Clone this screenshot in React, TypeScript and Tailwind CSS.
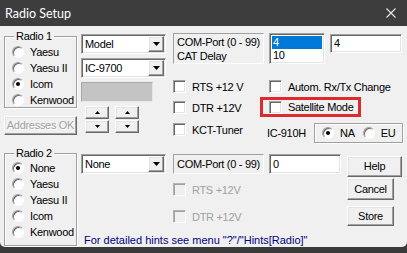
import React from "react";

const SUNKEN =
  "border border-t-[#a0a0a0] border-l-[#a0a0a0] border-b-white border-r-white shadow-[inset_1px_1px_0_#696969,inset_-1px_-1px_0_#e3e3e3]";
const RAISED =
  "border border-t-white border-l-white border-b-[#696969] border-r-[#696969] shadow-[inset_-1px_-1px_0_#a0a0a0,inset_1px_1px_0_#e3e3e3] bg-[#f0f0f0]";
const ETCHED = "border border-[#a0a0a0] shadow-[inset_1px_1px_0_#ffffff,1px_1px_0_#ffffff]";

function DownTri() {
  return (
    <svg width="7" height="4" viewBox="0 0 7 4">
      <path d="M0 0H7L3.5 4Z" fill="#000" />
    </svg>
  );
}

function SmallTri({ up }: { up?: boolean }) {
  return (
    <svg width="5" height="3" viewBox="0 0 5 3">
      {up ? <path d="M0 3H5L2.5 0Z" fill="#000" /> : <path d="M0 0H5L2.5 3Z" fill="#000" />}
    </svg>
  );
}

function Select({ value }: { value: string }) {
  return (
    <div className={`${SUNKEN} bg-white w-[85px] h-[20px] p-[1px] flex items-center`}>
      <span className="flex-1 pl-[2px] leading-[16px]">{value}</span>
      <span className={`${RAISED} w-[16px] h-[16px] flex items-center justify-center`}>
        <DownTri />
      </span>
    </div>
  );
}

function Radio({ label, checked }: { label: string; checked?: boolean }) {
  return (
    <div className="flex items-center h-[16px]">
      <span className="w-[12px] h-[12px] shrink-0 rounded-full bg-white border border-t-[#a0a0a0] border-l-[#a0a0a0] border-b-white border-r-white shadow-[inset_1px_1px_0_#696969] flex items-center justify-center">
        {checked && <span className="w-[4px] h-[4px] rounded-full bg-black" />}
      </span>
      <span className="ml-[6px] whitespace-nowrap leading-[14px]">{label}</span>
    </div>
  );
}

function Check({ label, disabled }: { label: string; disabled?: boolean }) {
  return (
    <div className="flex items-center h-[13px]">
      <span
        className={
          disabled
            ? "w-[13px] h-[13px] shrink-0 border border-t-[#b4b4b4] border-l-[#b4b4b4] border-b-white border-r-white shadow-[inset_1px_1px_0_#a0a0a0] bg-[#f0f0f0]"
            : `w-[13px] h-[13px] shrink-0 ${SUNKEN} bg-white`
        }
      />
      <span className={`ml-[6px] whitespace-nowrap leading-[14px] ${disabled ? "text-[#a0a0a0]" : ""}`}>
        {label}
      </span>
    </div>
  );
}

function Spinner() {
  return (
    <div className="flex flex-col gap-[1px]">
      <span className={`${RAISED} w-[24px] h-[13px] flex items-center justify-center`}>
        <SmallTri up />
      </span>
      <span className={`${RAISED} w-[24px] h-[13px] flex items-center justify-center`}>
        <SmallTri />
      </span>
    </div>
  );
}

export default function App() {
  return (
    <div className="w-[407px] h-[253px] bg-[#3a3a3a] overflow-hidden font-['Liberation_Sans',Arial,sans-serif] text-[11px] tracking-[-0.3px] text-black">
      {/* Title bar */}
      <div className="h-[26px] bg-[#3d3d3d] flex items-center justify-between pl-[5px] pr-[11px]">
        <span className="font-['Lato',sans-serif] text-[12.5px] tracking-normal text-white leading-[16px] pt-[1px]">Radio Setup</span>
        <svg width="10" height="10" viewBox="0 0 10 10">
          <path d="M0.5 0.5L9.5 9.5M9.5 0.5L0.5 9.5" stroke="#e8e8e8" strokeWidth="1.1" />
        </svg>
      </div>

      {/* Body */}
      <div className="h-[221px] bg-[#f0f0f0] rounded-b-[5px] flex pl-[4px]">
        {/* Left column */}
        <div className="w-[73px] flex flex-col shrink-0">
          <div className={`relative ${ETCHED} h-[72px] mt-[10px] pl-[7px] pt-[7px]`}>
            <span className="absolute left-[9px] top-[-8px] bg-[#f0f0f0] px-[2px] leading-[14px]">Radio 1</span>
            <Radio label="Yaesu" />
            <Radio label="Yaesu II" />
            <Radio label="Icom" checked />
            <Radio label="Kenwood" />
          </div>
          <div className={`${RAISED} h-[19px] mt-[8px] flex items-center justify-center text-[#a0a0a0] [text-shadow:1px_1px_0_#fff] whitespace-nowrap`}>
            Addresses OK
          </div>
          <div className={`relative ${ETCHED} h-[93px] mt-[18px] pl-[7px] pt-[6px]`}>
            <span className="absolute left-[9px] top-[-8px] bg-[#f0f0f0] px-[2px] leading-[14px]">Radio 2</span>
            <Radio label="None" checked />
            <Radio label="Yaesu" />
            <Radio label="Yaesu II" />
            <Radio label="Icom" />
            <Radio label="Kenwood" />
          </div>
        </div>

        {/* Right area */}
        <div className="ml-[4px] w-[322px] flex flex-col">
          {/* Top block */}
          <div className="h-[124px] flex">
            {/* Col A */}
            <div className="w-[85px] flex flex-col">
              <div className="mt-[8px]">
                <Select value="Model" />
              </div>
              <div className="mt-[4px]">
                <Select value="IC-9700" />
              </div>
              <div className="mt-[4px] w-[72px] h-[20px] bg-[#c4c4c4] border border-t-[#a8a8a8] border-l-[#a8a8a8] border-b-[#e6e6e6] border-r-[#e6e6e6]" />
              <div className="mt-[4px] ml-[4px] flex gap-[6px]">
                <Spinner />
                <Spinner />
              </div>
            </div>
            {/* Col B */}
            <div className="ml-[6px] w-[93px] flex flex-col pl-[1px]">
              <div className="mt-[7px] w-[91px] h-[31px] border border-t-[#a0a0a0] border-l-[#a0a0a0] border-b-white border-r-white pl-[3px] pt-[1px] leading-[14px] whitespace-nowrap">
                <div>COM-Port (0 - 99)</div>
                <div>CAT Delay</div>
              </div>
              <div className="mt-[16px]">
                <Check label="RTS +12 V" />
              </div>
              <div className="mt-[8px]">
                <Check label="DTR +12V" />
              </div>
              <div className="mt-[9px]">
                <Check label="KCT-Tuner" />
              </div>
            </div>
            {/* Col C */}
            <div className="w-[138px] flex flex-col">
              <div className="mt-[7px] flex items-start">
                <div className={`${SUNKEN} bg-white ml-[4px] w-[56px] h-[31px] p-[2px] leading-[13px]`}>
                  <div className="bg-[#0078d7] text-white pl-[1px] h-[13px]">4</div>
                  <div className="pl-[1px] h-[13px]">10</div>
                </div>
                <div className={`${SUNKEN} bg-white ml-[5px] mt-[1px] w-[72px] h-[19px] pl-[3px] leading-[17px]`}>4</div>
              </div>
              <div className="mt-[16px] ml-[4px]">
                <Check label="Autom. Rx/Tx Change" />
              </div>
              <div className="mt-[4px] ml-[-5px] w-[101px] h-[20px] border-[3px] border-[#dd2a2e] flex items-center pl-[6px]">
                <Check label="Satellite Mode" />
              </div>
              <div className="mt-[6px] flex items-center">
                <span className="ml-[2px] w-[47px] whitespace-nowrap">IC-910H</span>
                <div className={`${ETCHED} w-[89px] h-[20px] flex items-center pl-[7px]`}>
                  <Radio label="NA" checked />
                  <div className="ml-[8px]">
                    <Radio label="EU" />
                  </div>
                </div>
              </div>
            </div>
          </div>

          {/* Bottom block */}
          <div className="h-[76px] flex">
            <div className="w-[85px] mt-[4px]">
              <Select value="None" />
            </div>
            <div className="ml-[6px] w-[93px] flex flex-col pl-[1px]">
              <div className="mt-[4px] w-[91px] h-[20px] border border-t-[#a0a0a0] border-l-[#a0a0a0] border-b-white border-r-white pl-[3px] leading-[18px] whitespace-nowrap">
                COM-Port (0 - 99)
              </div>
              <div className="mt-[9px]">
                <Check label="RTS +12V" disabled />
              </div>
              <div className="mt-[14px]">
                <Check label="DTR +12V" disabled />
              </div>
            </div>
            <div className="w-[138px] flex items-start">
              <div className={`${SUNKEN} bg-white ml-[4px] mt-[4px] w-[72px] h-[20px] pl-[3px] leading-[18px]`}>0</div>
              <div className="ml-[6px] flex flex-col">
                <div className={`${RAISED} mt-[6px] w-[55px] h-[21px] flex items-center justify-center`}>Help</div>
                <div className={`${RAISED} mt-[1px] w-[47px] h-[22px] flex items-center justify-center`}>Cancel</div>
                <div className={`${RAISED} mt-[6px] w-[47px] h-[20px] flex items-center justify-center`}>Store</div>
              </div>
            </div>
          </div>

          <div className="mt-[7px] ml-[3px] leading-[14px] tracking-normal text-[#000080] whitespace-nowrap">
            For detailed hints see menu "?"/"Hints[Radio]"
          </div>
        </div>
      </div>
    </div>
  );
}
